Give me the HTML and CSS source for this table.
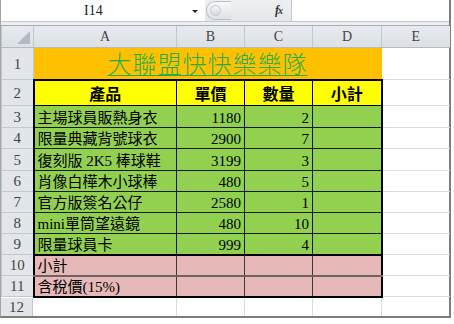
FILE: index.html
```html
<!DOCTYPE html>
<html lang="zh-Hant">
<head>
<meta charset="utf-8">
<title>大聯盟快快樂樂隊</title>
<link rel="stylesheet" href="styles.css">
</head>
<body>
<div class="frame">
  <div class="fbar">
    <div class="namebox"><span class="name">I14</span><span class="caret"></span></div>
    <div class="fsep">
      <div class="pill"><span class="knob"></span></div>
      <span class="fx">f<i>x</i></span>
    </div>
    <div class="finput"></div>
  </div>
  <div class="band"></div>
  <table class="sheet">
    <colgroup>
      <col class="c-rh"><col class="c-a"><col class="c-b"><col class="c-c"><col class="c-d"><col class="c-e">
    </colgroup>
    <tbody>
    <tr class="hdr">
      <th class="corner"><span class="tri"></span></th><th>A</th><th>B</th><th>C</th><th>D</th><th class="last">E</th>
    </tr>
    <tr class="r1">
      <th>1</th><td colspan="4" class="title"><span>大聯盟快快樂樂隊</span></td><td></td>
    </tr>
    <tr class="r2">
      <th>2</th><td class="h first">產品</td><td class="h">單價</td><td class="h">數量</td><td class="h lastc">小計</td><td></td>
    </tr>
    <tr class="d r3">
      <th>3</th><td class="first">主場球員販熱身衣</td><td class="n">1180</td><td class="n">2</td><td class="lastc"></td><td></td>
    </tr>
    <tr class="d r4">
      <th>4</th><td class="first">限量典藏背號球衣</td><td class="n">2900</td><td class="n">7</td><td class="lastc"></td><td></td>
    </tr>
    <tr class="d r5">
      <th>5</th><td class="first">復刻版 2K5 棒球鞋</td><td class="n">3199</td><td class="n">3</td><td class="lastc"></td><td></td>
    </tr>
    <tr class="d r6">
      <th>6</th><td class="first">肖像白樺木小球棒</td><td class="n">480</td><td class="n">5</td><td class="lastc"></td><td></td>
    </tr>
    <tr class="d r7">
      <th>7</th><td class="first">官方版簽名公仔</td><td class="n">2580</td><td class="n">1</td><td class="lastc"></td><td></td>
    </tr>
    <tr class="d r8">
      <th>8</th><td class="first">mini單筒望遠鏡</td><td class="n">480</td><td class="n">10</td><td class="lastc"></td><td></td>
    </tr>
    <tr class="d r9">
      <th>9</th><td class="first">限量球員卡</td><td class="n">999</td><td class="n">4</td><td class="lastc"></td><td></td>
    </tr>
    <tr class="p r10">
      <th>10</th><td class="first">小計</td><td class="pc"></td><td class="pc"></td><td class="lastc"></td><td></td>
    </tr>
    <tr class="p r11">
      <th>11</th><td class="first">含稅價(15%)</td><td class="pc"></td><td class="pc"></td><td class="lastc"></td><td></td>
    </tr>
    </tbody>
  </table>
  <div class="row12">
    <div class="rh">12</div>
    <div class="cell ca"></div>
    <div class="cell cb"></div>
    <div class="cell cc"></div>
    <div class="cell cd"></div>
    <div class="cell ce"></div>
  </div>
</div>
</body>
</html>
```

FILE: styles.css
```css
html, body {
  margin: 0;
  padding: 0;
  background: #ffffff;
}
body {
  font-family: "Liberation Serif", "Noto Sans CJK TC", serif;
  color: #000;
}
.frame {
  width: 448px;
  border-left: 1px solid #a4a4a4;
  border-right: 2px solid #7d7d7d;
  border-bottom: 2px solid #7d7d7d;
  background: #fff;
}

/* formula bar */
.fbar {
  display: flex;
  height: 21px;
  border-bottom: 1px solid #c5cad1;
}
.namebox {
  width: 204px;
  position: relative;
  background: #fff;
  display: flex;
  align-items: center;
}
.name {
  margin-left: 83px;
  font-family: "Liberation Serif", serif;
  font-size: 14px;
  color: #222;
}
.caret {
  position: absolute;
  left: 191px;
  top: 10px;
  width: 0;
  height: 0;
  border-left: 3px solid transparent;
  border-right: 3px solid transparent;
  border-top: 3px solid #222;
}
.fsep {
  width: 86px;
  background: linear-gradient(#eef0f3, #e3e6ea);
  display: flex;
  align-items: center;
  position: relative;
}
.pill {
  margin-left: 1px;
  width: 24px;
  height: 17px;
  border: 1px solid #b9bec6;
  border-right: none;
  border-radius: 9px 0 0 9px;
  background: linear-gradient(#f6f7f9, #dfe2e6);
  display: flex;
  align-items: center;
}
.knob {
  margin-left: 3px;
  width: 11px;
  height: 11px;
  border-radius: 50%;
  background: linear-gradient(#f4f5f7, #d5d9de);
  border: 1px solid #c4c9cf;
  box-sizing: border-box;
}
.fx {
  position: absolute;
  left: 70px;
  top: 3px;
  font-family: "Liberation Serif", serif;
  font-style: italic;
  font-weight: bold;
  font-size: 12px;
  color: #333;
  letter-spacing: -1px;
}
.fx i {
  font-size: 10px;
}
.finput {
  flex: 1;
  background: #fff;
  border-left: 1px solid #c5cad1;
}
.band {
  height: 3px;
  background: #eceef1;
  border-bottom: 1px solid #a7aeb8;
}

/* sheet */
.sheet {
  table-layout: fixed;
  border-collapse: collapse;
  width: 448px;
}
.c-rh { width: 32px; }
.c-a { width: 143px; }
.c-b { width: 68px; }
.c-c { width: 68px; }
.c-d { width: 69px; }
.c-e { width: 68px; }

.sheet th {
  background-color: #e2e5e9;
  border: 1px solid #c3c8cf;
  font-weight: normal;
  font-family: "Liberation Serif", serif;
  font-size: 15px;
  color: #444;
  padding: 0;
  text-align: center;
  line-height: 16px;
}
.hdr th {
  height: 20px;
  font-size: 14px;
  padding-top: 1px;
  border-top: none;
  border-bottom: 1px solid #b4bbc4;
  background: linear-gradient(#e6e9ed, #dde1e6);
}
.hdr .last { border-right: none; }
.corner {
  position: relative;
}
.tri {
  position: absolute;
  right: 3px;
  bottom: 3px;
  width: 0;
  height: 0;
  border-left: 13px solid transparent;
  border-bottom: 13px solid #b5bac1;
}
.sheet td {
  border: 1px solid #dadcdd;
  padding: 0 3px;
  font-size: 15px;
  white-space: nowrap;
  overflow: hidden;
  line-height: 18px;
  vertical-align: bottom;
}
.sheet tr > td:last-child { border-right: none; }

.r1 th { height: 31px; }
.sheet td.title {
  background: #ffc000;
  text-align: center;
  border-color: #ffc000;
  font-family: "Noto Sans CJK TC", sans-serif;
  font-weight: 300;
  font-size: 24px;
  color: #1fb04b;
  padding: 0 0 2px;
  line-height: 28px;
  overflow: visible;
  vertical-align: bottom;
}
.title span {
  text-decoration: underline;
  text-decoration-thickness: 1px;
  text-underline-offset: 2px;
  letter-spacing: 1px;
}

.r2 th { height: 25px; }
.r2 td.h {
  background: #ffff00;
  border: 1px solid #000;
  border-top: 2px solid #000;
  text-align: center;
  vertical-align: middle;
  font-family: "Noto Sans CJK TC", sans-serif;
  font-weight: bold;
  font-size: 16px;
}

.d td.first, .d td.n, .d td.lastc {
  background: #92d050;
  border: 1px solid #1a1a1a;
}
.d td.n { text-align: right; }
.r3 th { height: 21px; }
.r4 th { height: 20px; }
.r5 th { height: 21px; }
.r6 th { height: 20px; }
.r7 th { height: 20px; }
.r8 th { height: 20px; }
.r9 th { height: 20px; }
.r10 th { height: 20px; }
.r11 th { height: 20px; }

.p td.first, .p td.pc, .p td.lastc {
  background: #e6b8b7;
  border: 1px solid #3a3a3a;
}
.r10 td.first, .r10 td.pc, .r10 td.lastc {
  border-top: 2px solid #000;
  border-bottom: 2px solid #6b6262;
}
.r11 td.first, .r11 td.pc, .r11 td.lastc {
  border-bottom: 2px solid #000;
}
.sheet td.first { border-left: 2px solid #000; }
.sheet td.lastc { border-right: 2px solid #000; }

/* row 12 */
.row12 {
  display: flex;
  height: 18px;
}
.row12 .rh {
  width: 31px;
  flex: none;
  background: #e2e5e9;
  border-right: 1px solid #c3c8cf;
  font-family: "Liberation Serif", serif;
  font-size: 15px;
  line-height: 18px;
  color: #444;
  text-align: center;
}
.row12 .cell {
  flex: none;
  border-right: 1px solid #dadcdd;
  box-sizing: border-box;
}
.row12 .ca { width: 144px; }
.row12 .cb { width: 68px; }
.row12 .cc { width: 68px; }
.row12 .cd { width: 69px; }
.row12 .ce { flex: 1; border-right: none; }
```
